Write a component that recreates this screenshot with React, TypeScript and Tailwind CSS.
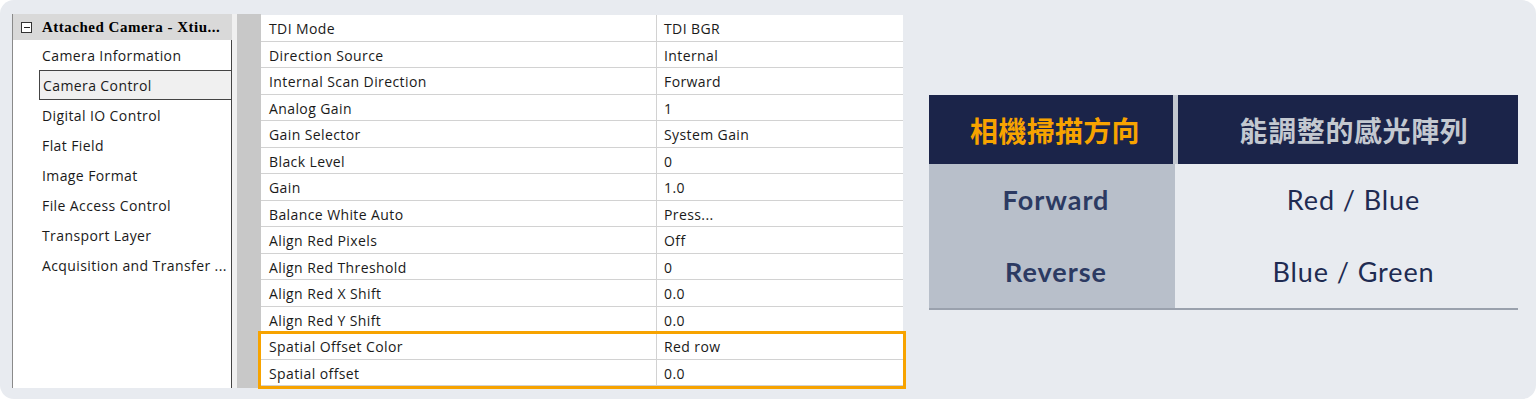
import React from "react";

const treeItems = [
  "Camera Information",
  "Camera Control",
  "Digital IO Control",
  "Flat Field",
  "Image Format",
  "File Access Control",
  "Transport Layer",
  "Acquisition and Transfer ...",
];

const props: [string, string][] = [
  ["TDI Mode", "TDI BGR"],
  ["Direction Source", "Internal"],
  ["Internal Scan Direction", "Forward"],
  ["Analog Gain", "1"],
  ["Gain Selector", "System Gain"],
  ["Black Level", "0"],
  ["Gain", "1.0"],
  ["Balance White Auto", "Press..."],
  ["Align Red Pixels", "Off"],
  ["Align Red Threshold", "0"],
  ["Align Red X Shift", "0.0"],
  ["Align Red Y Shift", "0.0"],
  ["Spatial Offset Color", "Red row"],
  ["Spatial offset", "0.0"],
];

const rows = [
  { dir: "Forward", arr: "Red / Blue" },
  { dir: "Reverse", arr: "Blue / Green" },
];

// 左側：相機樹狀選單
const CameraTree = () => (
  <div className="flex w-[220px] flex-col border-l border-[#8a8a8a] bg-white">
    <div className="flex h-[26px] items-center gap-[10px] bg-[#d9d9d9] pl-[8px]">
      <span className="flex h-[11px] w-[11px] shrink-0 items-center justify-center border border-[#333] bg-white">
        <span className="h-px w-[6px] bg-[#222]" />
      </span>
      <span className="whitespace-nowrap font-['Liberation_Serif',serif] text-[15px] font-bold tracking-[0.5px] text-black">
        Attached Camera - Xtiu...
      </span>
    </div>
    <div className="flex flex-1 flex-col border-r border-[#444]">
      {treeItems.map((item) => {
        const selected = item === "Camera Control";
        return (
          <div
            key={item}
            className={
              selected
                ? "ml-[26px] -mr-px flex h-[30px] items-center whitespace-nowrap border border-[#444] bg-[#f0f0f0] pl-[3px] text-[14px] tracking-[0.4px] text-[#1a1a1a]"
                : "flex h-[30px] items-center whitespace-nowrap pl-[29px] text-[14px] tracking-[0.4px] text-[#1a1a1a]"
            }
          >
            {item}
          </div>
        );
      })}
    </div>
  </div>
);

// 中間：屬性表格
const PropertyGrid = () => (
  <div className="relative flex w-[642px] flex-col bg-white">
    {props.map(([name, value]) => (
      <div key={name} className="flex h-[26.5px] border-b border-[#d2d2d2]">
        <div className="flex w-[396px] items-center border-r border-[#d2d2d2] pl-[8px] pt-[2px] text-[14px] tracking-[0.4px] text-[#1a1a1a]">
          {name}
        </div>
        <div className="flex flex-1 items-center pl-[7px] pt-[2px] text-[14px] tracking-[0.4px] text-[#1a1a1a]">
          {value}
        </div>
      </div>
    ))}
    {/* 標記的兩列 */}
    <div className="pointer-events-none absolute -left-[3px] -right-[3px] top-[316px] -bottom-[3px] border-[3px] border-[#f7a300]" />
  </div>
);

export default function App() {
  return (
    <div className="h-[402px] w-[1539px] bg-white">
      <div className="flex h-[399px] w-[1536px] items-start rounded-[14px] bg-[#e8ebf0] font-['Open_Sans',sans-serif]">
        <div className="ml-[12px] mt-[14px] flex h-[374px]">
          <CameraTree />
          <div className="w-[5px] bg-[#f0f0f0]" />
          <div className="w-[24px] bg-[#c8c8c8]" />
          <div className="mt-px">
            <PropertyGrid />
          </div>
        </div>

        {/* 右側：掃描方向對照表 */}
        <div className="ml-[26px] mt-[95px] flex w-[589px] flex-col border-b-2 border-[#9aa1ad] font-['Lato','Noto_Sans_CJK_TC',sans-serif]">
          <div className="flex h-[69px]">
            <div className="flex w-[244px] items-center justify-center bg-[#1b2449] pl-[8px] font-['Noto_Sans_CJK_TC',sans-serif] text-[28px] font-bold tracking-[0.3px] text-[#f7a300]">
              相機掃描方向
            </div>
            <div className="w-[5px] bg-[#c3c8d0]" />
            <div className="flex flex-1 items-center justify-center bg-[#1b2449] pl-[12px] font-['Noto_Sans_CJK_TC',sans-serif] text-[28px] font-bold tracking-[0.6px] text-[#c3c8d0]">
              能調整的感光陣列
            </div>
          </div>
          {rows.map((r) => (
            <div key={r.dir} className="flex h-[72px]">
              <div className="flex w-[246px] items-center justify-center bg-[#b8bfca] pl-[8px] text-[27px] font-bold tracking-[1px] text-[#2c3a62]">
                {r.dir}
              </div>
              <div className="flex flex-1 items-center justify-center pl-[14px] text-[27px] tracking-[0.9px] text-[#1f2b52]">
                {r.arr}
              </div>
            </div>
          ))}
        </div>
      </div>
    </div>
  );
}
